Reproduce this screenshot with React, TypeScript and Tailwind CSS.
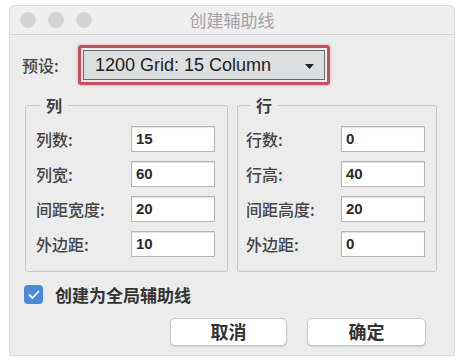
import React from "react";

const cjk = { fontFamily: '"PingFang SC","Noto Sans CJK SC","Noto Sans",sans-serif' };
const latin = { fontFamily: '"Liberation Sans",Arial,"Noto Sans CJK SC",sans-serif' };

function Field({ label, value, labelW }: { label: string; value: string; labelW: string }) {
  return (
    <div className="flex items-center h-[26px]">
      <div className={`${labelW} text-[16px] font-medium text-[#444]`} style={cjk}>
        {label}
      </div>
      <div
        className="h-[26px] w-[84px] bg-white border border-[#b5b5b5] shadow-[inset_0_1px_1px_rgba(0,0,0,0.12)] flex items-center pl-[4px] text-[15px] font-bold text-[#2a2a2a]"
        style={latin}
      >
        {value}
      </div>
    </div>
  );
}

function Group({
  title,
  rows,
  className,
}: {
  title: string;
  rows: [string, string][];
  className: string;
}) {
  return (
    <fieldset className={`border border-[#c6c6c6] rounded-[3px] ${className}`}>
      <legend className="ml-[4px] px-[6px] text-[16px] font-bold text-[#3c3c3c] leading-[20px]" style={cjk}>
        {title}
      </legend>
      <div className="flex flex-col gap-[9px] pt-[11px] pb-[14px]">
        {rows.map(([l, v]) => (
          <Field key={l} label={l} value={v} labelW="w-[95px]" />
        ))}
      </div>
    </fieldset>
  );
}

export default function App() {
  return (
    <div className="w-[464px] h-[361px] bg-white pt-[5px] px-[9px] pb-[5px]">
      <div className="h-full bg-[#ececec] rounded-t-[6px] border border-[#dcdcdc] flex flex-col">
        {/* title bar */}
        <div className="h-[29px] relative flex items-center bg-[#efefef] rounded-t-[6px] border-b border-[#d2d2d2]">
          <div className="flex gap-[12px] pl-[10px]">
            <div className="w-[16px] h-[16px] rounded-full bg-[#d3d3d3]" />
            <div className="w-[16px] h-[16px] rounded-full bg-[#d3d3d3]" />
            <div className="w-[16px] h-[16px] rounded-full bg-[#d3d3d3]" />
          </div>
          <div className="absolute inset-0 flex items-center justify-center text-[17px] text-[#a2a2a2]" style={cjk}>
            创建辅助线
          </div>
        </div>

        {/* preset */}
        <div className="flex items-center pt-[10px] pl-[12px]">
          <div className="w-[56px] text-[16px] font-medium text-[#444]" style={cjk}>
            预设:
          </div>
          <div className="border-[3px] border-[#c4525c] rounded-[3px] p-[2px] shadow-[0_0_3px_rgba(200,80,90,0.5)]">
            <div
              className="w-[242px] h-[30px] bg-[#dcdedf] border border-[#6a6a6a] flex items-center justify-between pl-[11px] pr-[10px] text-[18px] text-[#222]"
              style={latin}
            >
              <span>1200 Grid: 15 Column</span>
              <svg width="9" height="5" viewBox="0 0 9 5" className="mt-[2px]">
                <path d="M0 0 L9 0 L4.5 5 Z" fill="#222" />
              </svg>
            </div>
          </div>
        </div>

        {/* groups */}
        <div className="flex gap-[9px] pl-[15px] pr-[17px] pt-[10px]">
          <Group
            title="列"
            className="w-[204px] pl-[10px]"
            rows={[
              ["列数:", "15"],
              ["列宽:", "60"],
              ["间距宽度:", "20"],
              ["外边距:", "10"],
            ]}
          />
          <Group
            title="行"
            className="w-[201px] pl-[8px]"
            rows={[
              ["行数:", "0"],
              ["行高:", "40"],
              ["间距高度:", "20"],
              ["外边距:", "0"],
            ]}
          />
        </div>

        {/* checkbox */}
        <div className="flex items-center pl-[14px] pt-[10px]">
          <div className="w-[19px] h-[19px] rounded-[4px] bg-[#4b88d6] flex items-center justify-center">
            <svg width="12" height="10" viewBox="0 0 12 10">
              <path d="M1.5 5 L4.5 8 L10.5 1.5" stroke="white" strokeWidth="1.8" fill="none" strokeLinecap="round" strokeLinejoin="round" />
            </svg>
          </div>
          <div className="ml-[12px] text-[17px] font-bold text-[#333]" style={cjk}>
            创建为全局辅助线
          </div>
        </div>

        {/* buttons */}
        <div className="flex justify-end gap-[20px] pr-[28px] pt-[10px]">
          <button className="w-[117px] h-[28px] bg-white border border-[#c8c8c8] rounded-[5px] shadow-[0_1px_1px_rgba(0,0,0,0.12)] text-[18px] font-bold text-[#333] flex items-center justify-center" style={cjk}>
            取消
          </button>
          <button className="w-[119px] h-[28px] bg-white border border-[#c8c8c8] rounded-[5px] shadow-[0_1px_1px_rgba(0,0,0,0.12)] text-[18px] font-bold text-[#333] flex items-center justify-center" style={cjk}>
            确定
          </button>
        </div>
      </div>
    </div>
  );
}
